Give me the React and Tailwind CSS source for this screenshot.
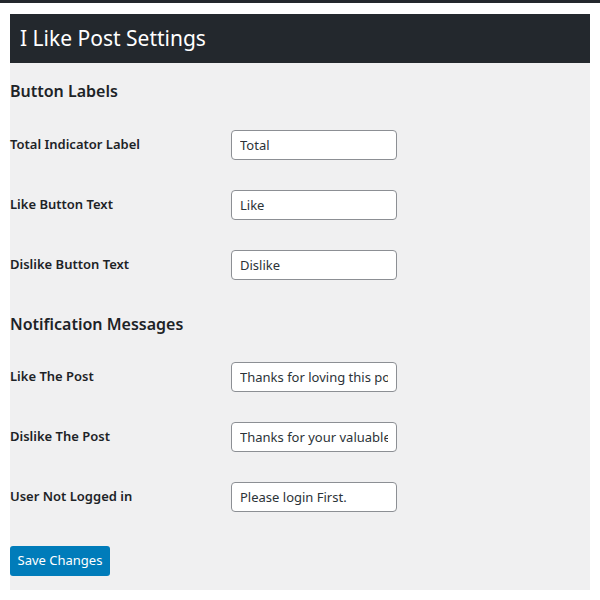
import React from 'react'

const buttonFields = [
  { label: 'Total Indicator Label', value: 'Total' },
  { label: 'Like Button Text', value: 'Like' },
  { label: 'Dislike Button Text', value: 'Dislike' },
]

const messageFields = [
  { label: 'Like The Post', value: 'Thanks for loving this post.' },
  { label: 'Dislike The Post', value: 'Thanks for your valuable feedback.' },
  { label: 'User Not Logged in', value: 'Please login First.' },
]

function FieldRow({ label, value }) {
  return (
    <div className="flex items-center h-[60px]">
      <label className="w-[221px] text-[13px] font-semibold text-[#1d2327]">{label}</label>
      <input
        type="text"
        defaultValue={value}
        className="w-[166px] h-[30px] px-2 bg-white border border-[#8c8f94] rounded-[4px] text-[13px] text-[#2c3338] outline-none"
      />
    </div>
  )
}

export default function App() {
  return (
    <div className="w-[600px] h-[600px] bg-white" style={{ fontFamily: '"Noto Sans", "Open Sans", sans-serif' }}>
      <div className="h-[3px] bg-[#23282d]" />
      <div className="mx-[10px] mt-[11px] bg-[#f0f0f1] h-[576px]">
        <div className="h-[49px] bg-[#23282d] flex items-center px-[10px]">
          <h1 className="text-[21px] text-white font-normal">I Like Post Settings</h1>
        </div>
        <div className="pt-[15px]">
          <h2 className="text-[16px] font-semibold text-[#1d2327] leading-[26px]">Button Labels</h2>
          <div className="mt-[11px]">
            {buttonFields.map(f => <FieldRow key={f.label} {...f} />)}
          </div>
          <h2 className="mt-[16px] text-[16px] font-semibold text-[#1d2327] leading-[26px]">Notification Messages</h2>
          <div className="mt-[10px]">
            {messageFields.map(f => <FieldRow key={f.label} {...f} />)}
          </div>
          <button className="mt-[19px] h-[30px] w-[100px] bg-[#007cba] text-white text-[13px] rounded-[3px]">
            Save Changes
          </button>
        </div>
      </div>
    </div>
  )
}
